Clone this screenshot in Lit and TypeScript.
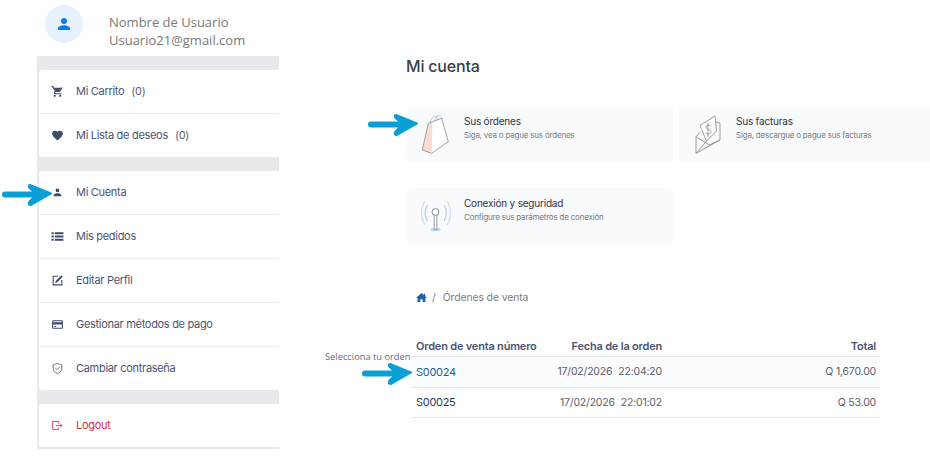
import { LitElement, html, css, svg } from 'lit';
import { customElement } from 'lit/decorators.js';

const ink = "#3f4a68";

const icons: Record<string, any> = {
  cart: svg`<path fill="${ink}" d="M7 18a2 2 0 1 0 0 4 2 2 0 0 0 0-4zm10 0a2 2 0 1 0 0 4 2 2 0 0 0 0-4zM7.2 14.8l.03-.12.9-1.63h7.45c.75 0 1.41-.41 1.75-1.03l3.86-7-1.74-.97L15.55 11H8.53L4.27 2H1v2h2l3.6 7.59-1.35 2.45C4.52 15.37 5.48 17 7 17h12v-2H7.42a.25.25 0 0 1-.22-.2zM6 5h13l-3 6H8z"/>`,
  heart: svg`<path fill="${ink}" d="M12 21.3l-1.5-1.3C5.4 15.4 2 12.3 2 8.5 2 5.4 4.4 3 7.5 3c1.7 0 3.4.8 4.5 2.1C13.1 3.8 14.8 3 16.5 3 19.6 3 22 5.4 22 8.5c0 3.8-3.4 6.9-8.5 11.5z"/>`,
  user: svg`<path fill="${ink}" d="M12 11.500a3.500 3.500 0 1 0 0-7 3.500 3.500 0 0 0 0 7zm0 2c-2.500 0-7 1.200-7 3.500V19h14v-2c0-2.300-4.500-3.500-7-3.500z"/>`,
  list: svg`<path fill="${ink}" d="M1 4h4v4H1zm0 6h4v4H1zm0 6h4v4H1zM7 4h16v4H7zm0 6h16v4H7zm0 6h16v4H7z"/>`,
  edit: svg`<path fill="none" stroke="${ink}" stroke-width="2" d="M13 4H4v16h16v-9"/><path fill="${ink}" d="M19 2.500l2.500 2.500L11 15.500l-3.200.7.7-3.200z"/>`,
  card: svg`<path fill="${ink}" d="M20 4H4a2 2 0 0 0-2 2v12c0 1.100.9 2 2 2h16a2 2 0 0 0 2-2V6a2 2 0 0 0-2-2zm0 14H4v-6h16zm0-10H4V6h16z"/><path fill="${ink}" d="M5.500 15h4v1.500h-4z"/>`,
  shield: svg`<path fill="none" stroke="#555c70" stroke-width="1.500" d="M12 2.500l8 2.800v6c0 4.800-3.300 8.500-8 10.200-4.700-1.700-8-5.400-8-10.200v-6z"/><path fill="none" stroke="#555c70" stroke-width="1.500" d="M8.500 11.500l2.600 2.600 4.500-4.600"/>`,
  logout: svg`<path fill="none" stroke="#e0455f" stroke-width="1.800" d="M14 8V4.500H3v15h11V16M9 12h11M17 8.500l3.500 3.500-3.500 3.500"/>`,
};

const groupA = [
  { icon: "cart", label: "Mi Carrito", count: "(0)" },
  { icon: "heart", label: "Mi Lista de deseos", count: "(0)" },
];
const groupB = [
  { icon: "user", label: "Mi Cuenta" },
  { icon: "list", label: "Mis pedidos" },
  { icon: "edit", label: "Editar Perfil" },
  { icon: "card", label: "Gestionar métodos de pago" },
  { icon: "shield", label: "Cambiar contraseña" },
];

const bag = html`<svg viewBox="0 0 40 46" width="40" height="46">
  <path fill="none" stroke="#b4c2e2" stroke-width="1" d="M13 13c1-5 3-7.500 5-7.500s3.500 2 4 6M17 12c1-5 3-7.500 5-7.500s3 2.500 3 6"/>
  <path fill="#fbdcd2" d="M11.300 12.300l4.400-1 -1 31-9.400-3.300z"/>
  <path fill="#fff" d="M15.700 11.300l9-4 6.600 23.400-16.600 11.600z"/>
  <path fill="none" stroke="#7a808e" stroke-width=".7" stroke-linejoin="round" d="M11.300 12.300l13.400-5 6.600 23.400-16.600 11.600-9.400-3.300z"/>
</svg>`;

const envelope = html`<svg viewBox="0 0 40 46" width="40" height="46" fill="none" stroke="#73777f" stroke-width=".7" stroke-linejoin="round">
  <path d="M11 14.500L26 5l1.500 15-10 10z" fill="#fff"/>
  <path d="M11 21L7 25.700v16.600L31 29V12.300l-4-1.500"/>
  <path d="M7 25.700l13.300 8.300L31 29M7.700 42.300l10-12.500"/>
  <path d="M19 12v14M21.500 15c-1.500-1.500-4.500-1-4.500 1.200s5 2 5 4.500-3.500 3-5.500 1.300"/>
</svg>`;

const antenna = html`<svg viewBox="0 0 40 46" width="40" height="46" fill="none">
  <ellipse cx="18.500" cy="36.500" rx="5" ry="1.800" fill="#bcd3f2"/>
  <path stroke="#b5c8e6" stroke-width="1.200" d="M10.500 12c-3 5-3 11 0 16M27 12c3 5 3 11 0 16"/>
  <path stroke="#cfdcf2" stroke-width="1.200" d="M8 8c-4.500 7-4.500 17 0 24M30 8c4.500 7 4.500 17 0 24"/>
  <path stroke="#7d8596" stroke-width=".8" fill="#fff" d="M17.200 22v14.500h2.600V22"/>
  <circle cx="18.500" cy="19" r="3.500" fill="#fff" stroke="#7d8596" stroke-width=".9"/>
</svg>`;

const cards = [
  { art: bag, title: "Sus órdenes", sub: "Siga, vea o pague sus órdenes" },
  { art: envelope, title: "Sus facturas", sub: "Siga, descargue o pague sus facturas" },
  { art: antenna, title: "Conexión y seguridad", sub: "Configure sus parámetros de conexión" },
];

const orders = [
  { id: "S00024", date: "17/02/2026", time: "22:04:20", total: "Q 1,670.00", active: true },
  { id: "S00025", date: "17/02/2026", time: "22:01:02", total: "Q 53.00", active: false },
];

const arrow = (cls: string) => html`<svg class="arrow ${cls}" viewBox="0 0 52 24" width="52" height="24">
  <path fill="none" stroke="#0a9fd4" stroke-width="6" stroke-linecap="round" d="M4 11.500H34"/>
  <path fill="#0a9fd4" stroke="#0a9fd4" stroke-width="2" stroke-linejoin="round" d="M29 2L50 10.500 30 22c-2 .5-3-2-1.500-3.500L32 15V8L28.500 5C27.500 3.500 27.500 2 29 2z"/>
</svg>`;

@customElement('app-root')
export class AppRoot extends LitElement {
  static styles = css`
    :host {
      display: block;
      position: relative;
      width: 930px;
      height: 468px;
      overflow: hidden;
      background: #fff;
      font-family: Inter, "Liberation Sans", sans-serif;
    }
    .page { display: flex; height: 100%; }

    .side { width: 242px; margin-left: 37px; flex: none; }
    .profile { display: flex; height: 56px; margin-left: 8px; }
    .avatar {
      width: 38px; height: 38px; margin-top: 5px; border-radius: 50%;
      background: #e8f2fd; display: flex; align-items: center; justify-content: center;
    }
    .who {
      margin-left: 26px; padding-top: 13px;
      font: 13px/18px "Open Sans", sans-serif; color: #777;
    }
    .menu { background: #e7e9ec; padding: 14px 0 2px 2px; }
    .group { background: #fff; border-radius: 3px 0 0 3px; margin-bottom: 14px; }
    .group:last-child { margin-bottom: 0; }
    .row {
      display: flex; align-items: center; height: 42px; padding-bottom: 1px;
      padding-left: 12px; font-size: 11px; letter-spacing: -0.3px; color: #4b5472;
      border-bottom: 1px solid #e9ebee;
    }
    .row:last-child { border-bottom: none; }
    .row svg { width: 13px; height: 13px; flex: none; margin-right: 12px; }
    .count { margin-left: 7px; color: #5c6270; }
    .logout { color: #d32f4b; }

    .main { flex: 1; padding: 56px 0 0 127px; min-width: 0; }
    h1 { margin: 0 0 30px; font-size: 16px; letter-spacing: -0.2px; line-height: 20px; font-weight: 500; color: #3a3f4a; }
    .cards { display: grid; grid-template-columns: 266px 266px; column-gap: 6px; row-gap: 25px; margin-left: 1px; }
    .card {
      display: flex; gap: 7px; height: 57px; padding: 6px 0 0 10px; box-sizing: border-box;
      background: #f8fafc; border-radius: 6px;
    }
    .card svg { flex: none; margin-top: -1px; }
    .card-title { font-size: 10px; letter-spacing: -0.2px; line-height: 14px; color: #2f343d; margin-top: 1.5px; }
    .card-sub { font-size: 8px; letter-spacing: -0.2px; line-height: 14px; color: #777c86; }

    .crumbs {
      display: flex; align-items: center; gap: 5px;
      margin: 44px 0 0 10px; height: 16px;
      font-size: 10.5px; letter-spacing: -0.15px; color: #7c8087;
    }
    .crumbs svg { width: 11px; height: 11px; }
    .crumb-text { margin-left: 2px; }

    table {
      width: 469px; margin: 28px 0 0 5px; border-collapse: collapse;
      font-size: 10.5px; letter-spacing: -0.2px; color: #5a5f68; table-layout: fixed;
    }
    th { height: 21px; padding: 2px 0 0; font-size: 11px; font-weight: 600; color: #4b5472; }
    td { height: 29.5px; padding: 0; }
    tr { border-bottom: 1px solid #e4e6e9; }
    .num { text-align: left; width: 130px; padding-left: 5px; }
    .date { text-align: right; width: 116px; }
    th.total, td.total { text-align: right; padding-right: 4px; }
    td.num { color: #1f3a5f; font-size: 11px; letter-spacing: -0.3px; }
    tr.active { background: #fbfcfd; }
    tr.active td.num { color: #17609e; }
    .time { margin-left: 6px; }

    .arrow { position: absolute; }
    .a1 { left: 1px; top: 183px; }
    .a2 { left: 367px; top: 113px; }
    .a3 { left: 361px; top: 362px; }
    .hint {
      position: absolute; left: 325px; top: 351px;
      font: 9.300px/12px "Open Sans", sans-serif; color: #6c6c6c;
    }
  `;

  row(item: { icon: string; label: string; count?: string }, cls = "") {
    return html`<div class="row ${cls}">
      <svg viewBox="0 0 24 24">${icons[item.icon]}</svg>
      <span>${item.label}</span>
      ${item.count ? html`<span class="count">${item.count}</span>` : ""}
    </div>`;
  }

  render() {
    return html`
      <div class="page">
        <aside class="side">
          <div class="profile">
            <div class="avatar">
              <svg viewBox="0 0 24 24" width="16" height="16"><path fill="#0a7cf0" d="M12 12a4.500 4.500 0 1 0 0-9 4.500 4.500 0 0 0 0 9zm0 2c-3 0-9 1.500-9 4.500V21h18v-2.500c0-3-6-4.500-9-4.500z"/></svg>
            </div>
            <div class="who">Nombre de Usuario<br />Usuario21@gmail.com</div>
          </div>
          <div class="menu">
            <div class="group">${groupA.map((i) => this.row(i))}</div>
            <div class="group">${groupB.map((i) => this.row(i))}</div>
            <div class="group">${this.row({ icon: "logout", label: "Logout" }, "logout")}</div>
          </div>
        </aside>
        <main class="main">
          <h1>Mi cuenta</h1>
          <div class="cards">
            ${cards.map((c) => html`<div class="card">
              ${c.art}
              <div>
                <div class="card-title">${c.title}</div>
                <div class="card-sub">${c.sub}</div>
              </div>
            </div>`)}
          </div>
          <div class="crumbs">
            <svg viewBox="0 0 24 24"><path fill="#1d5fa8" d="M12 2L0 13h3.500v9h6v-6h5v6h6v-9H24l-4-3.700V4h-3v2.600z"/></svg>
            <span>/</span>
            <span class="crumb-text">Órdenes de venta</span>
          </div>
          <table>
            <thead>
              <tr>
                <th class="num">Orden de venta número</th>
                <th class="date">Fecha de la orden</th>
                <th class="total">Total</th>
              </tr>
            </thead>
            <tbody>
              ${orders.map((o) => html`<tr class="${o.active ? "active" : ""}">
                <td class="num">${o.id}</td>
                <td class="date">${o.date}<span class="time">${o.time}</span></td>
                <td class="total">${o.total}</td>
              </tr>`)}
            </tbody>
          </table>
        </main>
      </div>
      ${arrow("a1")}${arrow("a2")}${arrow("a3")}
      <div class="hint">Selecciona tu orden</div>
    `;
  }
}
